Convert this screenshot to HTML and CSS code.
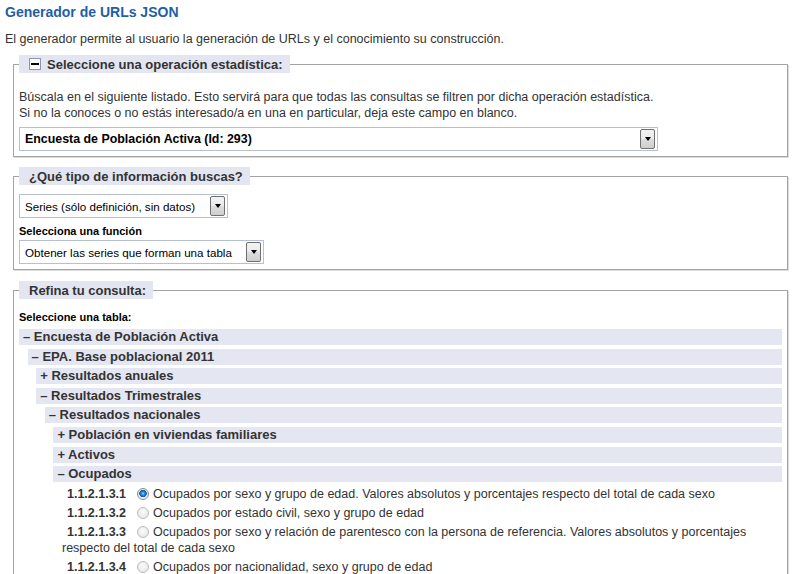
FILE: index.html
```html
<!DOCTYPE html>
<html lang="es">
<head>
    <meta charset="UTF-8">
    <title>Generador de URLs JSON</title>
    <link rel="stylesheet" href="styles.css">
</head>
<body>
    <h1 class="title">Generador de URLs JSON</h1>
    <p class="intro">El generador permite al usuario la generación de URLs y el conocimiento su construcción.</p>

    <!-- Operación estadística -->
    <fieldset class="box">
        <legend><span class="toggle"></span>Seleccione una operación estadística:</legend>
        <p class="help">Búscala en el siguiente listado. Esto servirá para que todas las consultas se filtren por dicha operación estadística.<br>Si no la conoces o no estás interesado/a en una en particular, deja este campo en blanco.</p>
        <div class="combo combo-op">
            <select class="combo-input strong">
                <option>Encuesta de Población Activa (Id: 293)</option>
            </select>
            <span class="combo-btn"></span>
        </div>
    </fieldset>

    <!-- Tipo de información -->
    <fieldset class="box box-type">
        <legend>¿Qué tipo de información buscas?</legend>
        <div class="combo combo-type">
            <select class="combo-input">
                <option>Series (sólo definición, sin datos)</option>
            </select>
            <span class="combo-btn"></span>
        </div>
        <label class="field-label">Selecciona una función</label>
        <div class="combo combo-fn">
            <select class="combo-input">
                <option>Obtener las series que forman una tabla</option>
            </select>
            <span class="combo-btn"></span>
        </div>
    </fieldset>

    <!-- Refinar -->
    <fieldset class="box box-refine">
        <legend>Refina tu consulta:</legend>
        <div class="field-label table-label">Seleccione una tabla:</div>
        <ul class="tree">
            <li><div class="node">– Encuesta de Población Activa</div>
                <ul>
                    <li><div class="node">– EPA. Base poblacional 2011</div>
                        <ul>
                            <li><div class="node">+ Resultados anuales</div></li>
                            <li><div class="node">– Resultados Trimestrales</div>
                                <ul>
                                    <li><div class="node">– Resultados nacionales</div>
                                        <ul>
                                            <li><div class="node">+ Población en viviendas familiares</div></li>
                                            <li><div class="node">+ Activos</div></li>
                                            <li><div class="node">– Ocupados</div>
                                                <ul class="tables">
                                                    <li><b>1.1.2.1.3.1</b> <input type="radio" name="tabla" checked> Ocupados por sexo y grupo de edad. Valores absolutos y porcentajes respecto del total de cada sexo</li>
                                                    <li><b>1.1.2.1.3.2</b> <input type="radio" name="tabla"> Ocupados por estado civil, sexo y grupo de edad</li>
                                                    <li><b>1.1.2.1.3.3</b> <input type="radio" name="tabla"> Ocupados por sexo y relación de parentesco con la persona de referencia. Valores absolutos y porcentajes respecto del total de cada sexo</li>
                                                    <li><b>1.1.2.1.3.4</b> <input type="radio" name="tabla"> Ocupados por nacionalidad, sexo y grupo de edad</li>
                                                </ul>
                                            </li>
                                        </ul>
                                    </li>
                                </ul>
                            </li>
                        </ul>
                    </li>
                </ul>
            </li>
        </ul>
    </fieldset>
</body>
</html>
```

FILE: styles.css
```css
/* Base */
* {
    box-sizing: border-box;
}

body {
    margin: 0;
    padding: 4px 5px;
    font-family: "Liberation Sans", Arial, sans-serif;
    font-size: 12.5px;
    color: #333;
    background: #fff;
}

ul {
    list-style: none;
    margin: 0;
    padding: 0;
}

.title {
    margin: 0;
    font-size: 14px;
    line-height: 16px;
    font-weight: bold;
    color: #1f5ea8;
}

.intro {
    margin: 11px 0 0;
    line-height: 16px;
}

/* Fieldsets */
.box {
    margin: 8px 7px 0 8px;
    padding: 0 5px 5px;
    border: 1px solid #a3a3a3;
    box-shadow: 1px 1px 0 #dcdcdc;
}

.box legend {
    display: flex;
    align-items: center;
    height: 18px;
    padding: 0 7px 0 10px;
    background: #e3e5f1;
    font-size: 13px;
    font-weight: bold;
    color: #333;
}

.box-type {
    margin-top: 10px;
}

.box-refine {
    margin-top: 11px;
}

.toggle {
    display: inline-flex;
    align-items: center;
    justify-content: center;
    width: 12px;
    height: 12px;
    margin-right: 6px;
    background: #fff;
    border: 1px solid #8a96b2;
}

.toggle::before {
    content: "";
    width: 8px;
    height: 2px;
    background: #000;
}

.help {
    margin: 16px 0 0;
    line-height: 16px;
}

/* Combos */
.combo {
    display: flex;
    align-items: center;
    height: 24px;
    margin-top: 6px;
    padding: 1px 2px 1px 0;
    border: 1px solid #b7c0cd;
    background: #fff;
}

.combo-op {
    width: 639px;
}

.combo-type {
    width: 209px;
    margin-top: 9px;
}

.combo-fn {
    width: 245px;
    margin-top: 2px;
}

.combo-input {
    flex: 1;
    min-width: 0;
    height: 100%;
    padding: 0 0 0 5px;
    border: none;
    outline: none;
    background: transparent;
    appearance: none;
    -webkit-appearance: none;
    font-family: "Liberation Sans", Arial, sans-serif;
    font-size: 11.6px;
    color: #000;
}

.combo-input.strong {
    font-size: 12.4px;
    font-weight: bold;
}

.combo-btn {
    display: flex;
    align-items: center;
    justify-content: center;
    width: 15px;
    height: 20px;
    border: 1px solid #707070;
    border-radius: 2px;
    background: linear-gradient(#f3f3f3, #ebebeb 50%, #dddddd 50%, #cfcfcf);
}

.combo-btn::before {
    content: "";
    border-left: 3.5px solid transparent;
    border-right: 3.5px solid transparent;
    border-top: 4px solid #000;
}

.field-label {
    display: block;
    margin-top: 6px;
    font-size: 11px;
    line-height: 14px;
    font-weight: bold;
    color: #000;
}

.table-label {
    margin-top: 11px;
}

/* Árbol de tablas */
.tree ul {
    padding-left: 8.6px;
}

.node {
    height: 16px;
    margin-top: 3.6px;
    padding-left: 4px;
    line-height: 16px;
    background: #e4e6f2;
    font-size: 13px;
    font-weight: bold;
    color: #333;
}

.tree > li > .node {
    margin-top: 5px;
}

.tables {
    margin-top: 4px;
}

.tables li {
    margin-bottom: 3px;
    line-height: 16px;
    color: #333;
}

.tables b {
    margin-left: 5px;
}

.tables input[type="radio"] {
    appearance: none;
    -webkit-appearance: none;
    width: 12px;
    height: 12px;
    margin: 0 1px 0 7px;
    vertical-align: -2px;
    border: 1px solid #bdbdbd;
    border-radius: 50%;
    background: radial-gradient(circle at 50% 40%, #fbfbfb, #e2e2e2);
}

.tables input[type="radio"]:checked {
    border-color: #8c8c8c;
    background: radial-gradient(circle at 50% 45%, #a8dcff 0, #2e8ee0 1.5px, #0b5aa6 3.5px, #eaeaea 4px, #f6f6f6 6px);
}
```
